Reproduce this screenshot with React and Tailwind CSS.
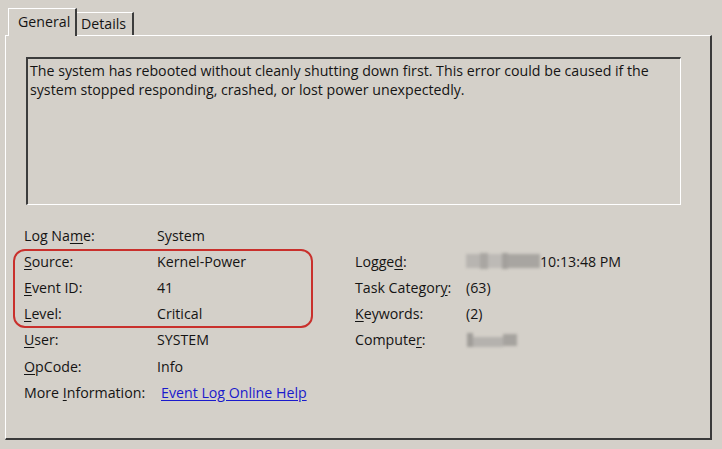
import React from 'react';

function Key({ children }) {
    return <span className="underline underline-offset-2">{children}</span>;
}

export default function App() {
    const left = [
        [<>Log Na<Key>m</Key>e:</>, 'System'],
        [<><Key>S</Key>ource:</>, 'Kernel-Power'],
        [<><Key>E</Key>vent ID:</>, '41'],
        [<><Key>L</Key>evel:</>, 'Critical'],
        [<><Key>U</Key>ser:</>, 'SYSTEM'],
        [<><Key>O</Key>pCode:</>, 'Info'],
    ];

    const right = [
        null,
        [<>Logge<Key>d</Key>:</>, (
            <span className="flex items-center">
                <span className="flex items-center h-[18px] w-[74px] blur-[1.5px]">
                    <span className="h-[14px] w-[14px] bg-[#b8b5b1]" />
                    <span className="h-[16px] w-[8px] bg-[#a9a6a2]" />
                    <span className="h-[14px] w-[14px] bg-[#bdbab6]" />
                    <span className="h-[16px] w-[6px] bg-[#a3a09c]" />
                    <span className="h-[14px] w-[32px] bg-[#a8a5a1]" />
                </span>
                <span>10:13:48 PM</span>
            </span>
        )],
        [<>Task Categor<Key>y</Key>:</>, '(63)'],
        [<><Key>K</Key>eywords:</>, '(2)'],
        [<>Compute<Key>r</Key>:</>, (
            <span className="flex items-center h-[18px] pl-[1px] blur-[1.5px]">
                <span className="h-[14px] w-[6px] bg-[#a09d99]" />
                <span className="h-[10px] w-[30px] bg-[#b5b2ae] mt-[4px]" />
                <span className="h-[12px] w-[14px] bg-[#a6a39f]" />
            </span>
        )],
        null,
    ];

    return (
        <div className="w-[722px] h-[449px] bg-[#d4d0c9] text-[#141414] font-['Open_Sans',sans-serif] text-[14.2px] overflow-hidden">
            {/* tabs */}
            <div className="flex items-end h-[35px] pl-[8px]">
                <div className="relative z-10 -mb-px h-[28px] w-[69px] bg-[#d4d0c9] border-l border-t border-white border-r-2 border-r-[#3c3c3c] pl-[9px] pt-[2px]">
                    General
                </div>
                <div className="h-[23px] w-[57px] border-t border-white border-r-2 border-r-[#3c3c3c] pl-[4px]">
                    Details
                </div>
            </div>

            {/* panel */}
            <div className="relative ml-[5px] w-[707px] h-[405px] border-l border-t border-white border-r-2 border-b-2 border-r-[#3a3a3a] border-b-[#3a3a3a] pt-[21px] pl-[20px]">
                <div className="w-[655px] h-[148px] border-t-2 border-l-2 border-[#3c3c3c] border-r border-b border-r-white border-b-white pl-[2px] pt-[2px] leading-[19px]">
                    The system has rebooted without cleanly shutting down first. This error could be caused if the system stopped responding, crashed, or lost power unexpectedly.
                </div>

                <div className="mt-[17px] -ml-[2px] grid grid-cols-[133px_198px_111px_1fr] auto-rows-[26.2px] items-center leading-[19px]">
                    {left.map(([label, value], i) => (
                        <React.Fragment key={i}>
                            <div>{label}</div>
                            <div>{value}</div>
                            <div>{right[i] ? right[i][0] : null}</div>
                            <div>{right[i] ? right[i][1] : null}</div>
                        </React.Fragment>
                    ))}
                    <div className="whitespace-nowrap">More <Key>I</Key>nformation:</div>
                    <div className="pl-[4px]">
                        <span className="text-[#1a1acc] underline underline-offset-2">Event Log Online Help</span>
                    </div>
                </div>

                {/* red highlight */}
                <div className="absolute left-[7px] top-[213px] w-[300px] h-[79px] rounded-[12px] border-2 border-[#c9302c]" />
            </div>
        </div>
    );
}
